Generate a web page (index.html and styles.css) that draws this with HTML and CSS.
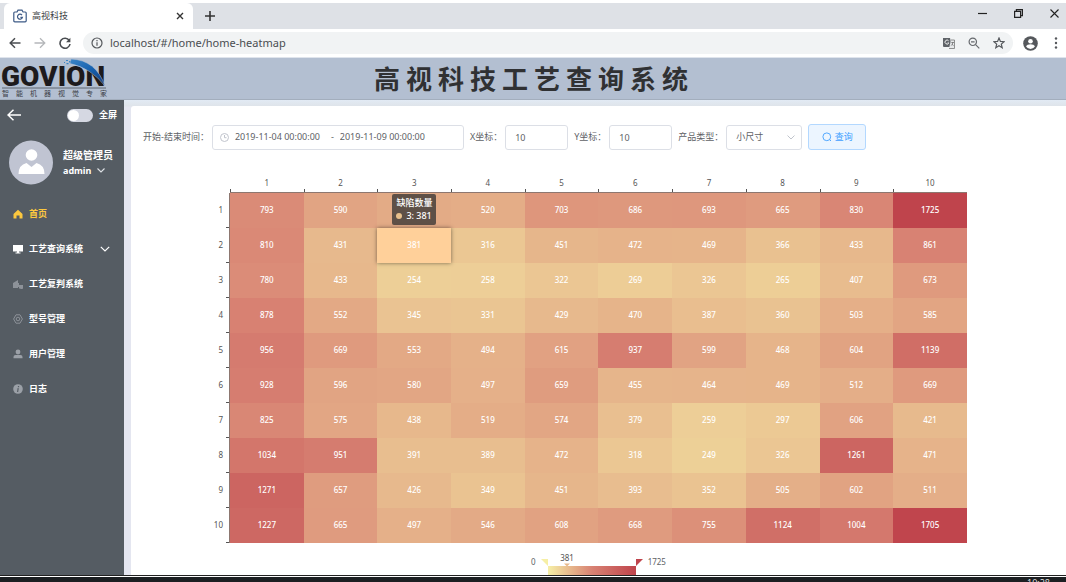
FILE: index.html
```html
<!DOCTYPE html>
<html lang="zh-CN">
<head>
<meta charset="utf-8">
<title>高视科技</title>
<link rel="stylesheet" href="styles.css">
</head>
<body>
<div class="tabstrip">
  <div class="tab">
    <svg class="tab-logo" width="14" height="14" viewBox="0 0 14 14" fill="none" stroke="#3d5a86" stroke-width="1.2"><path d="M4 3 5 1.2h4L10 3h2.2q1 0 1 1v7.800q0 1-1 1H1.800q-1 0-1-1V4q0-1 1-1z"/><path d="M9 6.200A2.500 2.500 0 1 0 9.400 8.400H7.400"/></svg>
    <span class="tab-title">高视科技</span>
    <button class="plain" aria-label="关闭标签页"><svg width="8" height="8" viewBox="0 0 8 8" stroke="#333" stroke-width="1.400"><path d="M1 1l6 6M7 1L1 7"/></svg></button>
  </div>
  <button class="plain new-tab" aria-label="新标签页"><svg width="10" height="10" viewBox="0 0 10 10" stroke="#333" stroke-width="1.600"><path d="M5 0v10M0 5h10"/></svg></button>
  <div class="window-buttons">
    <button class="plain" aria-label="最小化"><svg width="9" height="9" viewBox="0 0 9 9" stroke="#222" stroke-width="1.200"><path d="M0 4.500h9"/></svg></button>
    <button class="plain" aria-label="还原"><svg width="9" height="9" viewBox="0 0 9 9" fill="none" stroke="#222" stroke-width="1.200"><path d="M.6 2.400h6v6h-6zM2.400 2V.6h6v6H7"/></svg></button>
    <button class="plain" aria-label="关闭"><svg width="9" height="9" viewBox="0 0 9 9" stroke="#222" stroke-width="1.100"><path d="M.5.5l8 8M8.500.5l-8 8"/></svg></button>
  </div>
</div>
<div class="browserbar">
  <button class="plain" aria-label="后退"><svg width="12" height="12" viewBox="0 0 12 12" fill="none" stroke="#4a4d51" stroke-width="1.500"><path d="M11.500 6H1.500M6 1.200 1.200 6 6 10.800"/></svg></button>
  <button class="plain" aria-label="前进"><svg width="12" height="12" viewBox="0 0 12 12" fill="none" stroke="#b5b7ba" stroke-width="1.300"><path d="M.5 6h10M6 1.200 10.800 6 6 10.800"/></svg></button>
  <button class="plain" aria-label="重新加载"><svg width="12" height="12" viewBox="0 0 12 12" fill="none" stroke="#4a4d51" stroke-width="1.600"><path d="M10.200 3.500A5 5 0 1 0 11 7"/><path d="M11.400.8v4.400H7z" fill="#4a4d51" stroke="none"/></svg></button>
  <div class="address">
    <svg width="12" height="12" viewBox="0 0 12 12" fill="none" stroke="#55585c" stroke-width="1.200"><circle cx="6" cy="6" r="5"/><path d="M6 5.200v3.600M6 3v1.200"/></svg>
    <input class="url" aria-label="地址" value="localhost/#/home/home-heatmap">
    <svg width="12" height="12" viewBox="0 0 12 12"><path d="M0 1h7l2 9H1q-1 0-1-1z" fill="#5f6368"/><path d="M8 3h3.500v8.500H6" fill="#e6e8ea" stroke="#777" stroke-width=".8"/><path d="M5.600 3.800A2 2 0 1 0 5.800 6H4.500" fill="none" stroke="#fff" stroke-width=".9"/><path d="M8.300 5.500h2.700M9.700 5v.6q0 2-1.500 3M8.800 7l1.700 1.800" stroke="#666" stroke-width=".7" fill="none"/></svg>
    <svg width="12" height="12" viewBox="0 0 12 12" fill="none" stroke="#66696d" stroke-width="1.200"><circle cx="4.800" cy="4.800" r="3.700"/><path d="M7.600 7.600 11.300 11.300M3 4.800h3.600"/></svg>
    <svg width="12" height="12" viewBox="0 0 12 12" fill="none" stroke="#55585c" stroke-width="1.200"><path d="M6 1l1.400 3.400 3.700.3-2.800 2.400.9 3.600L6 8.800l-3.200 1.900.9-3.600L.9 4.700l3.700-.3z"/></svg>
  </div>
  <svg width="15" height="15" viewBox="0 0 15 15"><circle cx="7.500" cy="7.500" r="7.300" fill="#55585c"/><circle cx="7.500" cy="5.300" r="2.300" fill="#fff"/><path d="M3 10.300q1-2 4.500-2t4.500 2q-1.500 2.700-4.500 2.700T3 10.300z" fill="#fff"/></svg>
  <button class="plain more" aria-label="菜单"><svg width="4" height="12" viewBox="0 0 4 12" fill="#55585c"><circle cx="2" cy="1.500" r="1.200"/><circle cx="2" cy="6" r="1.200"/><circle cx="2" cy="10.500" r="1.200"/></svg></button>
</div>
<header class="banner">
  <svg class="brand" width="110" height="41" viewBox="0 0 110 41" role="img" aria-label="GOVION 智能机器视觉专家">
    <defs><linearGradient id="swoosh" x1="0" x2="1" y1="0" y2="1"><stop offset="0" stop-color="#3b86c8"/><stop offset=".5" stop-color="#1660ae"/><stop offset="1" stop-color="#153a78"/></linearGradient></defs>
    <text class="brand-name" x="1" y="28">GOVION</text>
    <path d="M71 1Q96 2 105 28Q91 10 70 5.500z" fill="url(#swoosh)" stroke="#b3bfd1" stroke-width=".5"/>
    <path d="M66 2h2v1h-2zM69 3h1.500v1.500H69zM66.500 5h2v1.200h-2zM64 4h1v1h-1z" fill="#3b86c8"/>
    <path d="M2 30h104" stroke="#5f6670"/>
    <text class="brand-tag" x="2" y="38">智能机器视觉专家</text>
  </svg>
  <h1 class="title">高视科技工艺查询系统</h1>
</header>
<div class="app">
  <aside class="sidebar">
    <div class="side-top">
      <button class="plain" aria-label="收起"><svg width="14" height="12" viewBox="0 0 14 12" fill="none" stroke="#fff" stroke-width="1.500"><path d="M14 6H1M6.500.7 1 6l5.500 5.300"/></svg></button>
      <label class="fullscreen"><input class="switch" type="checkbox" role="switch">全屏</label>
    </div>
    <div class="profile">
      <svg width="44" height="45" viewBox="0 0 44 44"><circle cx="22" cy="22" r="22" fill="#c0c4d2"/><circle cx="22.500" cy="14.500" r="5.800" fill="#fff"/><path d="M9.500 33.500q0-9 8-11l5 4 5-4q8 2 8 11z" fill="#fff"/></svg>
      <div class="who"><span>超级管理员</span><button class="plain account">admin <svg width="8" height="5" viewBox="0 0 8 5" fill="none" stroke="#dfe2e6" stroke-width="1.100"><path d="M.5.5 4 4 7.500.5"/></svg></button></div>
    </div>
    <nav class="menu">
      <a class="item active" href="#/home"><svg width="10" height="10" viewBox="0 0 10 10" fill="#fcc83f"><path d="M5 .8 9.500 5v4.500H6.500v-3h-3v3H.5V5z"/></svg>首页</a>
      <a class="item" href="#/query"><svg width="10" height="10" viewBox="0 0 10 10" fill="#fff"><path d="M0 1h10v6.500H0zM4 7.500h2v1h1.500V9.500h-5v-1H4z"/></svg>工艺查询系统<svg class="caret" width="10" height="6" viewBox="0 0 10 6" fill="none" stroke="#fff" stroke-width="1.200"><path d="M.8.8 5 5 9.200.8"/></svg></a>
      <a class="item" href="#/review"><svg width="10" height="10" viewBox="0 0 10 10" fill="#8d9299"><path d="M0 4 5 1v3h1v2h4v3.500H6V8H5v1H0z"/><circle cx="8.500" cy="8.500" r="1.500"/></svg>工艺复判系统</a>
      <a class="item" href="#/model"><svg width="10" height="10" viewBox="0 0 10 10" fill="none" stroke="#8d9299"><path d="M3 .8h4L9.400 5 7 9.200H3L.6 5z"/><circle cx="5" cy="5" r="1.800"/></svg>型号管理</a>
      <a class="item" href="#/users"><svg width="10" height="10" viewBox="0 0 10 10" fill="#9ba0a7"><circle cx="5" cy="3" r="2.400"/><path d="M.5 9.200V8q0-2 2-2h5q2 0 2 2v1.200z"/></svg>用户管理</a>
      <a class="item" href="#/logs"><svg width="10" height="10" viewBox="0 0 10 10"><circle cx="5" cy="5" r="4.800" fill="#9ba0a7"/><path d="M5.500 2v1.300M5.200 4.200 4.600 8" stroke="#555c63" stroke-width="1.200"/></svg>日志</a>
    </nav>
  </aside>
  <main class="panel">
    <form class="filters">
      <div class="field"><label for="from">开始-结束时间：</label>
        <div class="box range"><svg width="9" height="9" viewBox="0 0 9 9" fill="none" stroke="#c0c4cc"><circle cx="4.500" cy="4.500" r="4"/><path d="M4.500 2v2.700h2"/></svg><input id="from" value="2019-11-04 00:00:00"><span>-</span><input aria-label="结束时间" value="2019-11-09 00:00:00"></div></div>
      <div class="field"><label for="x">X坐标：</label><input class="box number" id="x" value="10"></div>
      <div class="field"><label for="y">Y坐标：</label><input class="box number" id="y" value="10"></div>
      <div class="field"><label for="type">产品类型：</label><div class="select-wrap"><select class="box type" id="type"><option>小尺寸</option></select><svg class="select-caret" width="8" height="5" viewBox="0 0 8 5" fill="none" stroke="#c0c4cc"><path d="M.5.5 4 4 7.500.5"/></svg></div></div>
      <button class="search" type="button"><svg width="10" height="10" viewBox="0 0 10 10" fill="none" stroke="#53a8ff"><circle cx="4.800" cy="4.800" r="3.900"/><path d="M7.500 7.500 9 9"/></svg>查询</button>
    </form>
    <section class="chart">
      <table class="heatmap" aria-label="缺陷数量"><thead></thead><tbody></tbody></table>
    </section>
    <div class="legend">
      <span>0</span>
      <svg width="102" height="34" viewBox="0 0 102 34">
        <defs><linearGradient id="scale"><stop offset="0" stop-color="#f6efa6"/><stop offset=".5" stop-color="#d88273"/><stop offset="1" stop-color="#bf444c"/></linearGradient></defs>
        <text class="legend-value" x="26" y="8">381</text>
        <path d="M23 10.500h6l-3 3z" fill="#e7b98b"/>
        <path d="M0 6h7v7z" fill="#f6efa6"/><path d="M95 6h7l-7 7z" fill="#bf444c"/>
        <path d="M7 13h88v21H7z" fill="url(#scale)"/>
      </svg>
      <span>1725</span>
    </div>
  </main>
</div>
<footer class="taskbar"><span>10:28</span></footer>
<script src="heatmap.js"></script>
</body>
</html>
```
FILE: styles.css
```css
* { box-sizing: border-box; }
body {
  margin: 0;
  height: 100vh;
  overflow: hidden;
  display: flex;
  flex-direction: column;
  padding-top: 3px;
  background: #fff;
  color: #606266;
  font: 9px/12px "Noto Sans", "Noto Sans CJK SC", sans-serif;
}
input, select, button { font: inherit; color: inherit; }
svg { flex: none; }
.plain {
  display: inline-flex;
  align-items: center;
  padding: 0;
  border: 0;
  background: none;
}

.tabstrip {
  flex: none;
  display: flex;
  align-items: center;
  height: 26px;
  padding-left: 4px;
  background: #dee1e6;
}
.tab {
  display: flex;
  align-items: center;
  gap: 5px;
  width: 189px;
  height: 26px;
  padding: 0 9px;
  border-radius: 6px 6px 0 0;
  background: #fff;
}
.tab-title { flex: 1; color: #3c4043; }
.new-tab { margin-left: 12px; }
.window-buttons {
  display: flex;
  gap: 27px;
  margin: -6px 7px 0 auto;
}

.browserbar {
  flex: none;
  display: flex;
  align-items: center;
  gap: 13px;
  height: 28px;
  padding: 0 8px 0 9px;
}
.address {
  flex: 1;
  display: flex;
  align-items: center;
  gap: 13px;
  height: 22px;
  margin-right: -3px;
  margin-left: -1px;
  padding: 0 8px;
  border-radius: 11px;
  background: #f1f3f4;
}
.url {
  flex: 1;
  min-width: 0;
  margin-left: -6px;
  padding: 0;
  border: 0;
  background: none;
  color: #4a4d51;
  font-size: 11px;
  line-height: 16px;
}
.more { margin-left: 3px; }

.banner {
  flex: none;
  display: grid;
  grid-template-columns: 110px 1fr 108px;
  align-items: center;
  height: 43px;
  border-top: 1px solid #dfe4ec;
  border-bottom: 1px solid #a3aebd;
  background: #b3bfd1;
}
.brand-name { font: 900 28px Roboto, sans-serif; fill: #1d1a1c; }
.brand-tag { font: 7px "Noto Sans CJK SC", sans-serif; letter-spacing: 7px; fill: #3c4047; }
.title {
  margin: 0;
  padding-bottom: 2px;
  text-align: center;
  color: #303133;
  font: bold 26px/36px "Noto Sans CJK SC", sans-serif;
  letter-spacing: 6px;
}

.app {
  flex: 1;
  min-height: 0;
  display: flex;
  gap: 7px;
  background: linear-gradient(#e2eaf4, #dfe4ea 6px, #e4e6f0 7px);
}
.sidebar {
  flex: none;
  width: 124px;
  background: #555c63;
  color: #fff;
  font-weight: bold;
}
.side-top {
  display: flex;
  justify-content: space-between;
  align-items: center;
  height: 30px;
  padding: 0 7px;
}
.fullscreen { display: flex; align-items: center; gap: 6px; }
.switch {
  appearance: none;
  display: flex;
  width: 26px;
  height: 13px;
  margin: 0;
  padding: 1px;
  border-radius: 7px;
  background: #d5d8e2;
}
.switch::before {
  content: "";
  width: 11px;
  height: 11px;
  border-radius: 50%;
  background: #fff;
}
.profile {
  display: flex;
  align-items: center;
  gap: 10px;
  padding: 10px 9px 11px;
}
.who { display: flex; flex-direction: column; gap: 2px; font-size: 10px; line-height: 14px; }
.account { gap: 6px; font-size: 9px; font-weight: bold; }
.menu { display: flex; flex-direction: column; }
.item {
  display: flex;
  align-items: center;
  gap: 6px;
  height: 35px;
  padding: 0 14px 0 13px;
  color: #fff;
  text-decoration: none;
}
.item.active { color: #fcc83f; }
.caret { margin-left: auto; }

.panel {
  flex: 1;
  min-width: 0;
  margin-top: 6px;
  overflow: hidden;
  border-radius: 3px 0 0;
  background: #fff;
}
.filters {
  display: flex;
  align-items: center;
  gap: 6px;
  padding: 18px 12px 0;
}
.field { display: flex; align-items: center; gap: 3px; white-space: nowrap; }
.box {
  height: 25px;
  border: 1px solid #dcdfe6;
  border-radius: 3px;
  background: #fff;
}
.range {
  display: flex;
  align-items: center;
  width: 252px;
  padding: 0 7px;
  gap: 6px;
}
.range input { width: 90px; padding: 0; border: 0; }
.number { width: 63px; padding: 0 9px; }
.select-wrap { position: relative; }
.type { appearance: none; width: 76px; padding: 0 9px; }
.select-caret { position: absolute; right: 7px; top: 10px; pointer-events: none; }
.search {
  display: flex;
  align-items: center;
  justify-content: center;
  gap: 3px;
  width: 58px;
  height: 26px;
  padding: 0;
  border: 1px solid #b3d8ff;
  border-radius: 3px;
  background: #ecf5ff;
  color: #409eff;
}

.chart { padding: 24px 99px 0 68px; font-size: 8px; }
.heatmap {
  width: 100%;
  table-layout: fixed;
  border-collapse: separate;
  border-spacing: 0;
  text-align: center;
}
.heatmap th, .heatmap td { position: relative; padding: 0 0 2px; }
.heatmap th { color: #555; font-weight: normal; }
.heatmap thead th { height: 19px; padding: 0; border-bottom: 1px solid #8d7770; }
.heatmap thead th:first-child { width: 31px; border: 0; }
.heatmap thead th + th::before {
  content: "";
  position: absolute;
  left: 0;
  bottom: 0;
  width: 1px;
  height: 3px;
  background: #555;
}
.heatmap tbody th {
  height: 35px;
  padding-right: 6px;
  border-right: 1px solid #8d7770;
  text-align: right;
}
.heatmap tbody th::before {
  content: "";
  position: absolute;
  right: 0;
  bottom: 0;
  width: 3px;
  height: 1px;
  background: #555;
}
.heatmap td { color: #fff; font-weight: 500; }
.heatmap .hovered { z-index: 1; box-shadow: 0 0 4px rgba(0, 0, 0, .5); }
.tooltip {
  position: absolute;
  left: 15px;
  bottom: 38px;
  padding: 2px 4px 3px;
  border-radius: 2px;
  background: rgba(50, 50, 50, .75);
  color: #fff;
  font-size: 9px;
  line-height: 13px;
  text-align: left;
  white-space: nowrap;
}
.tooltip div { display: flex; align-items: center; gap: 4px; }
.dot { width: 6px; height: 6px; border-radius: 50%; background: #e7bf8b; }
.legend {
  display: flex;
  justify-content: center;
  gap: 5px;
  padding-top: 10px;
  font-size: 8px;
  line-height: 18px;
}
.legend-value { font-size: 8px; text-anchor: middle; fill: #555; }

.taskbar {
  flex: none;
  height: 7px;
  padding: 1px 16px 0 0;
  border-top: 1px solid #222;
  overflow: hidden;
  background: linear-gradient(#fff 1px, #1c1f22 1px);
  color: #ddd;
  line-height: 12px;
  text-align: right;
}
```
FILE: heatmap.js
```js
const rows = [
  [793, 590, 540, 520, 703, 686, 693, 665, 830, 1725],
  [810, 431, 381, 316, 451, 472, 469, 366, 433, 861],
  [780, 433, 254, 258, 322, 269, 326, 265, 407, 673],
  [878, 552, 345, 331, 429, 470, 387, 360, 503, 585],
  [956, 669, 553, 494, 615, 937, 599, 468, 604, 1139],
  [928, 596, 580, 497, 659, 455, 464, 469, 512, 669],
  [825, 575, 438, 519, 574, 379, 259, 297, 606, 421],
  [1034, 951, 391, 389, 472, 318, 249, 326, 1261, 471],
  [1271, 657, 426, 349, 451, 393, 352, 505, 602, 511],
  [1227, 665, 497, 546, 608, 668, 755, 1124, 1004, 1705]
];
const stops = [[246, 239, 166], [216, 130, 115], [191, 68, 76]];

function color(value) {
  const t = value / 1725 * 2;
  const i = Math.min(Math.floor(t), 1);
  return "rgb(" + stops[i].map((c, k) => Math.round(c + (stops[i + 1][k] - c) * (t - i))).join(",") + ")";
}

document.querySelector(".heatmap thead").innerHTML =
  "<tr><th></th>" + rows[0].map((_, i) => `<th scope="col">${i + 1}</th>`).join("") + "</tr>";

document.querySelector(".heatmap tbody").innerHTML = rows.map((row, r) =>
  `<tr><th scope="row">${r + 1}</th>` + row.map((value, c) => {
    if (r === 1 && c === 2) {
      return `<td class="hovered" style="background:#ffd09a">${value}<div class="tooltip">缺陷数量<div><i class="dot"></i>3: ${value}</div></div></td>`;
    }
    const text = r === 0 && c === 2 ? "" : value;
    return `<td style="background:${color(value)}">${text}</td>`;
  }).join("") + "</tr>").join("");
```
